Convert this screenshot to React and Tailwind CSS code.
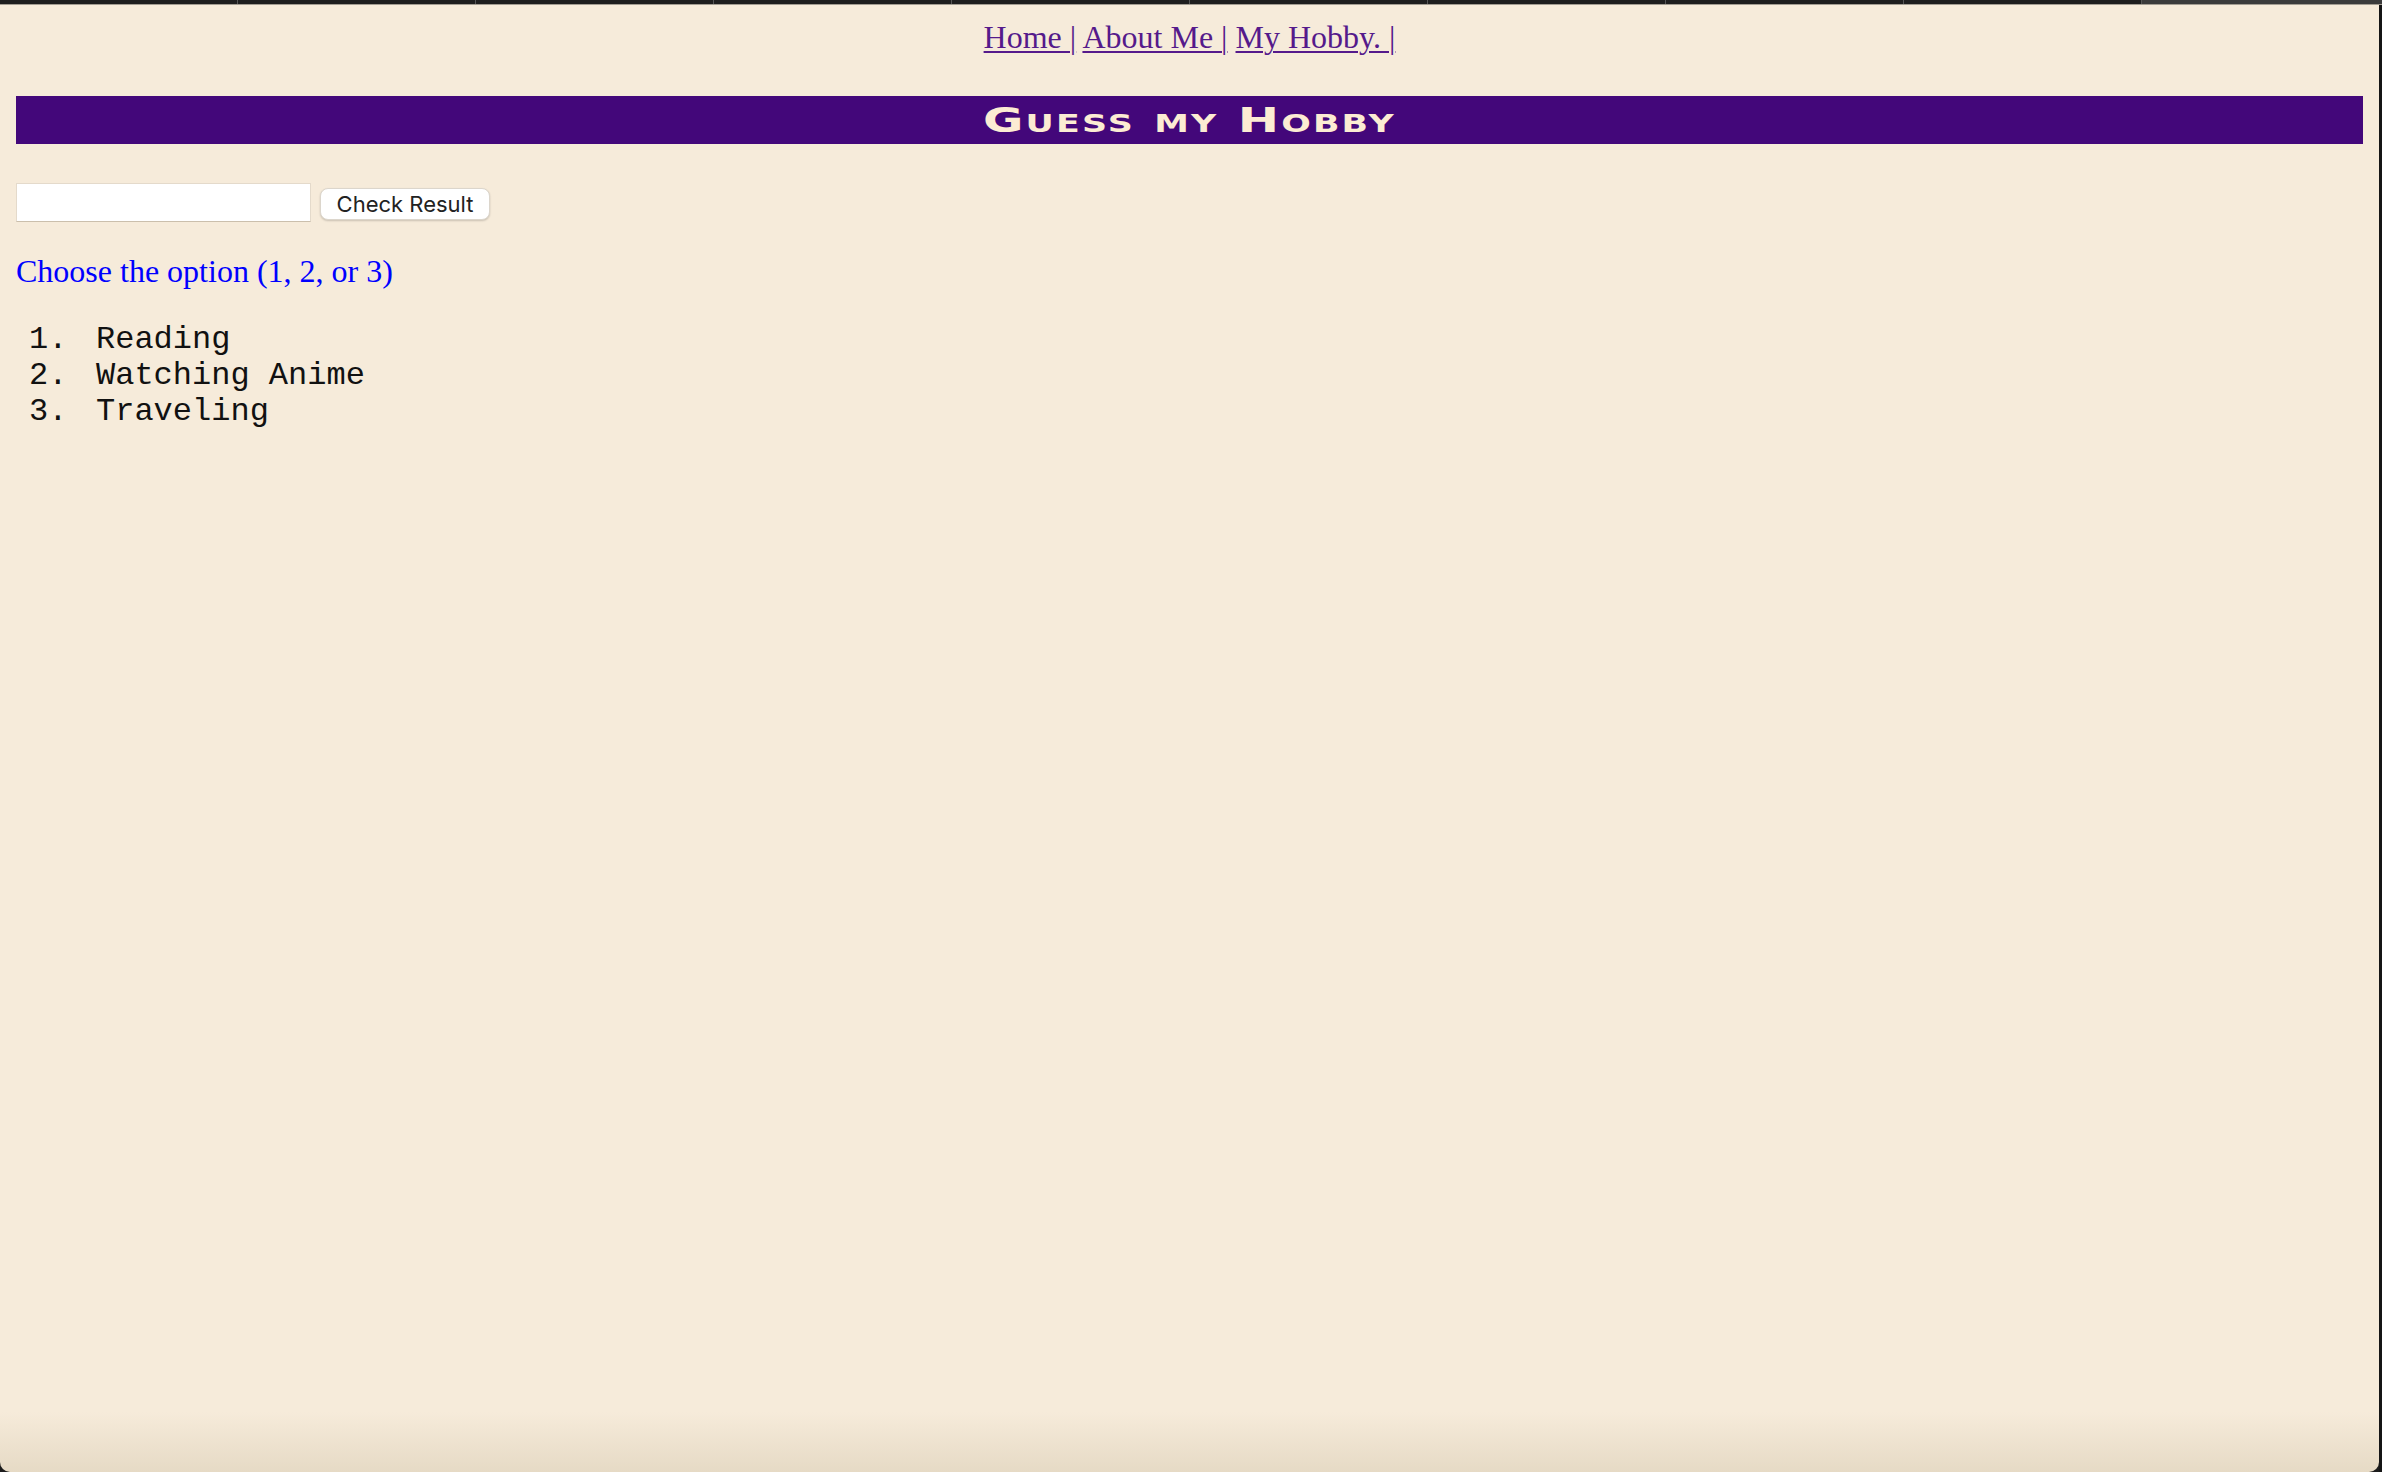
import { useState } from 'react';

const tabs = [0, 1, 2, 3, 4, 5, 6, 7, 8];

const hobbies = ['Reading', 'Watching Anime', 'Traveling'];

export default function App() {
  const [guess, setGuess] = useState('');

  return (
    <div className="flex flex-col h-screen w-full bg-[#1c1c1c] overflow-hidden">
      {/* browser tab strip edge */}
      <div className="flex h-[4px] shrink-0">
        {tabs.map((t) => (
          <div key={t} className="w-[238px] h-full bg-[#1e1e1e] border-r border-[#555555]" />
        ))}
        <div className="flex-1 h-full bg-[#3b3b3b]" />
      </div>
      <div className="h-px shrink-0 bg-[#a39d92]" />

      <div className="flex flex-1 min-h-0">
        <div className="flex-1 flex flex-col rounded-b-[10px] bg-[linear-gradient(to_bottom,#f6ebda_0%,#f6ebda_calc(100%-60px),#e6dac5_100%)] px-[16px] pt-[14px]">
          {/* nav */}
          <nav className="text-center text-[32px] leading-[37px] text-[#551a8b] font-['Liberation_Serif','Times_New_Roman',serif]">
            <a href="#" className="underline decoration-2 underline-offset-[3px]">Home |</a>{' '}
            <a href="#" className="underline decoration-2 underline-offset-[3px]">About Me |</a>{' '}
            <a href="#" className="underline decoration-2 underline-offset-[3px]">My Hobby. |</a>
          </nav>

          {/* title bar */}
          <div className="mt-[40px] h-[48px] bg-[#43077a] flex items-center justify-center">
            <h1 className="inline-block scale-x-[1.45] text-[34px] leading-none font-bold tracking-[1.5px] text-[#fcecd3] [font-variant-caps:small-caps] font-['DejaVu_Sans',sans-serif]">
              Guess my Hobby
            </h1>
          </div>

          {/* guess form */}
          <div className="mt-[39px] flex items-start gap-[9px]">
            <input
              type="text"
              value={guess}
              onChange={(e) => setGuess(e.target.value)}
              className="w-[295px] h-[39px] bg-white border border-[#e4dacb] border-b-[#cbbfac] outline-none px-2 text-[22px]"
            />
            <button className="mt-[5px] w-[170px] h-[32px] rounded-[8px] bg-white border border-[#dcd6cc] shadow-[0_1px_2px_rgba(0,0,0,0.18)] text-[22px] text-[#222222] font-['Inter',sans-serif] leading-none">
              Check Result
            </button>
          </div>

          <p className="mt-[31px] text-[32px] leading-[37px] text-[#0000ff] font-['Liberation_Serif','Times_New_Roman',serif]">
            Choose the option (1, 2, or 3)
          </p>

          {/* options */}
          <ol className="mt-[32px] text-[32px] leading-[36px] text-[#111111] font-['Liberation_Mono','Courier_New',monospace]">
            {hobbies.map((h, i) => (
              <li key={h} className="flex">
                <span className="ml-[13px] w-[67px] shrink-0">{i + 1}.</span>
                <span className="whitespace-pre">{h}</span>
              </li>
            ))}
          </ol>
        </div>
        <div className="w-[3px] shrink-0 bg-[#151515]" />
      </div>
    </div>
  );
}
